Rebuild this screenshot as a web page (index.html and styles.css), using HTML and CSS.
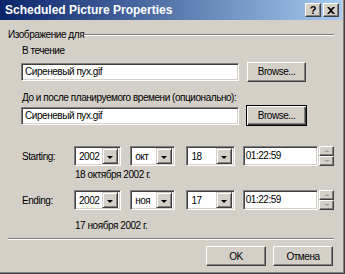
FILE: index.html
```html
<!DOCTYPE html>
<html lang="ru">

<head>
    <meta charset="UTF-8">
    <meta name="viewport" content="width=device-width, initial-scale=1.0">
    <title>Scheduled Picture Properties</title>
    <link rel="stylesheet" href="styles.css">
</head>

<body>
    <div class="window">
        <div class="titlebar">
            <span class="title">Scheduled Picture Properties</span>
            <div class="caption-btns">
                <div class="cap help">?</div>
                <div class="cap">
                    <svg width="8" height="7" viewBox="0 0 8 7"><path d="M0 0h2l2 2 2-2h2L5 3.5 8 7H6L4 5 2 7H0l3-3.5z" fill="#000"/></svg>
                </div>
            </div>
        </div>

        <div class="content">
            <div class="group-head">
                <span>Изображение для</span>
                <div class="etch"></div>
            </div>

            <div class="label">В течение</div>
            <div class="file-row">
                <div class="edit file">Сиреневый пух.gif</div>
                <div class="btn browse">Browse...</div>
            </div>

            <div class="label label-two">До и после планируемого времени (опционально):</div>
            <div class="file-row second">
                <div class="edit file">Сиреневый пух.gif</div>
                <div class="btn browse default">Browse...</div>
            </div>

            <div class="date-row first">
                <span class="row-label">Starting:</span>
                <div class="combo year"><span>2002</span><div class="drop"></div></div>
                <div class="combo month"><span>окт</span><div class="drop"></div></div>
                <div class="combo day"><span>18</span><div class="drop"></div></div>
                <div class="edit time">01:22:59</div>
                <div class="spin"><div class="up"></div><div class="down"></div></div>
            </div>
            <div class="date-text">18 октября 2002 г.</div>

            <div class="date-row">
                <span class="row-label">Ending:</span>
                <div class="combo year"><span>2002</span><div class="drop"></div></div>
                <div class="combo month"><span>ноя</span><div class="drop"></div></div>
                <div class="combo day"><span>17</span><div class="drop"></div></div>
                <div class="edit time">01:22:59</div>
                <div class="spin"><div class="up"></div><div class="down"></div></div>
            </div>
            <div class="date-text last">17 ноября 2002 г.</div>

            <div class="etch separator"></div>

            <div class="actions">
                <div class="btn action">OK</div>
                <div class="btn action">Отмена</div>
            </div>
        </div>
    </div>
</body>

</html>
```

FILE: styles.css
```css
* {
    box-sizing: border-box;
}

body {
    margin: 0;
    padding: 0;
    font-family: 'Liberation Sans', Arial, sans-serif;
    font-size: 10px;
    letter-spacing: -0.45px;
    color: #000;
    background: #d4d0c8;
}

.window {
    width: 345px;
    height: 274px;
    background: #d4d0c8;
    border-right: 1px solid #404040;
    border-bottom: 1px solid #404040;
    box-shadow: inset -1px -1px 0 #808080;
    overflow: hidden;
}

.titlebar {
    height: 20px;
    margin-right: 2px;
    display: flex;
    align-items: center;
    justify-content: space-between;
    padding-left: 5px;
    padding-right: 3px;
    background: linear-gradient(to right, #0a246a, #a6caf0);
}

.title {
    color: #fff;
    font-weight: bold;
    font-size: 12px;
    letter-spacing: 0;
}

.caption-btns {
    display: flex;
    gap: 2px;
}

.cap {
    width: 16px;
    height: 14px;
    display: flex;
    align-items: center;
    justify-content: center;
    background: #d4d0c8;
    border: 1px solid;
    border-color: #fff #404040 #404040 #fff;
    box-shadow: inset -1px -1px 0 #808080;
    font-weight: bold;
    font-size: 11px;
    letter-spacing: 0;
    line-height: 1;
}

.content {
    padding: 8px 10px 0 8px;
}

.group-head {
    display: flex;
    align-items: center;
    height: 13px;
    line-height: 13px;
}

.etch {
    flex: 1;
    height: 2px;
    border-top: 1px solid #808080;
    border-bottom: 1px solid #fff;
}

.label {
    margin-top: 3px;
    padding-left: 14px;
    height: 13px;
    line-height: 13px;
}

.label.label-two {
    margin-top: 9px;
}

.file-row {
    display: flex;
    align-items: center;
    gap: 8px;
    height: 21px;
    margin-top: 4px;
    padding-left: 13px;
}

.file-row.second {
    margin-top: 1px;
}

.edit {
    height: 18px;
    background: #fff;
    border: 1px solid;
    border-color: #808080 #fff #fff #808080;
    box-shadow: inset 1px 1px 0 #404040, inset -1px -1px 0 #d4d0c8;
    padding: 0 3px;
    line-height: 16px;
    white-space: nowrap;
}

.edit.file {
    width: 218px;
}

.btn {
    display: flex;
    align-items: center;
    justify-content: center;
    background: #d4d0c8;
    border: 1px solid;
    border-color: #fff #404040 #404040 #fff;
    box-shadow: inset -1px -1px 0 #808080;
}

.btn.browse {
    width: 59px;
    height: 20px;
}

.btn.default {
    width: 61px;
    height: 21px;
    margin-left: -1px;
    border: 1px solid #000;
    box-shadow: inset 1px 1px 0 #fff, inset -1px -1px 0 #404040, inset -2px -2px 0 #808080;
}

.date-row {
    display: flex;
    align-items: center;
    height: 20px;
    margin-top: 9px;
    padding-left: 14px;
}

.date-row.first {
    margin-top: 20px;
}

.row-label {
    width: 53px;
}

.combo {
    display: flex;
    align-items: center;
    justify-content: space-between;
    height: 20px;
    background: #fff;
    border: 1px solid;
    border-color: #808080 #fff #fff #808080;
    box-shadow: inset 1px 1px 0 #404040, inset -1px -1px 0 #d4d0c8;
    padding: 2px 2px 2px 4px;
}

.combo.year {
    width: 48px;
}

.combo.month {
    width: 46px;
    margin-left: 9px;
}

.combo.day {
    width: 49px;
    margin-left: 11px;
}

.drop {
    width: 16px;
    height: 16px;
    display: flex;
    align-items: center;
    justify-content: center;
    background: #d4d0c8;
    border: 1px solid;
    border-color: #d4d0c8 #404040 #404040 #d4d0c8;
    box-shadow: inset 1px 1px 0 #fff, inset -1px -1px 0 #808080;
}

.drop::after {
    content: '';
    margin-top: 2px;
    border-left: 3px solid transparent;
    border-right: 3px solid transparent;
    border-top: 3px solid #000;
}

.edit.time {
    width: 77px;
    height: 20px;
    margin-left: 8px;
    line-height: 18px;
    padding-left: 2px;
}

.spin {
    width: 15px;
    height: 20px;
    margin-left: 1px;
    display: flex;
    flex-direction: column;
}

.spin div {
    flex: 1;
    display: flex;
    align-items: center;
    justify-content: center;
    background: #d4d0c8;
    border: 1px solid;
    border-color: #fff #404040 #404040 #fff;
    box-shadow: inset -1px -1px 0 #808080;
}

.spin .up::after {
    content: '';
    border-left: 3px solid transparent;
    border-right: 3px solid transparent;
    border-bottom: 2px solid #a0a0a0;
}

.spin .down::after {
    content: '';
    border-left: 3px solid transparent;
    border-right: 3px solid transparent;
    border-top: 2px solid #a0a0a0;
}

.date-text {
    margin-top: 2px;
    padding-left: 67px;
    height: 13px;
    line-height: 13px;
}

.date-text.last {
    margin-top: 9px;
}

.separator {
    flex: none;
    margin-top: 6px;
}

.actions {
    display: flex;
    justify-content: flex-end;
    gap: 7px;
    margin-top: 6px;
    padding-right: 1px;
}

.btn.action {
    width: 60px;
    height: 20px;
}
```
